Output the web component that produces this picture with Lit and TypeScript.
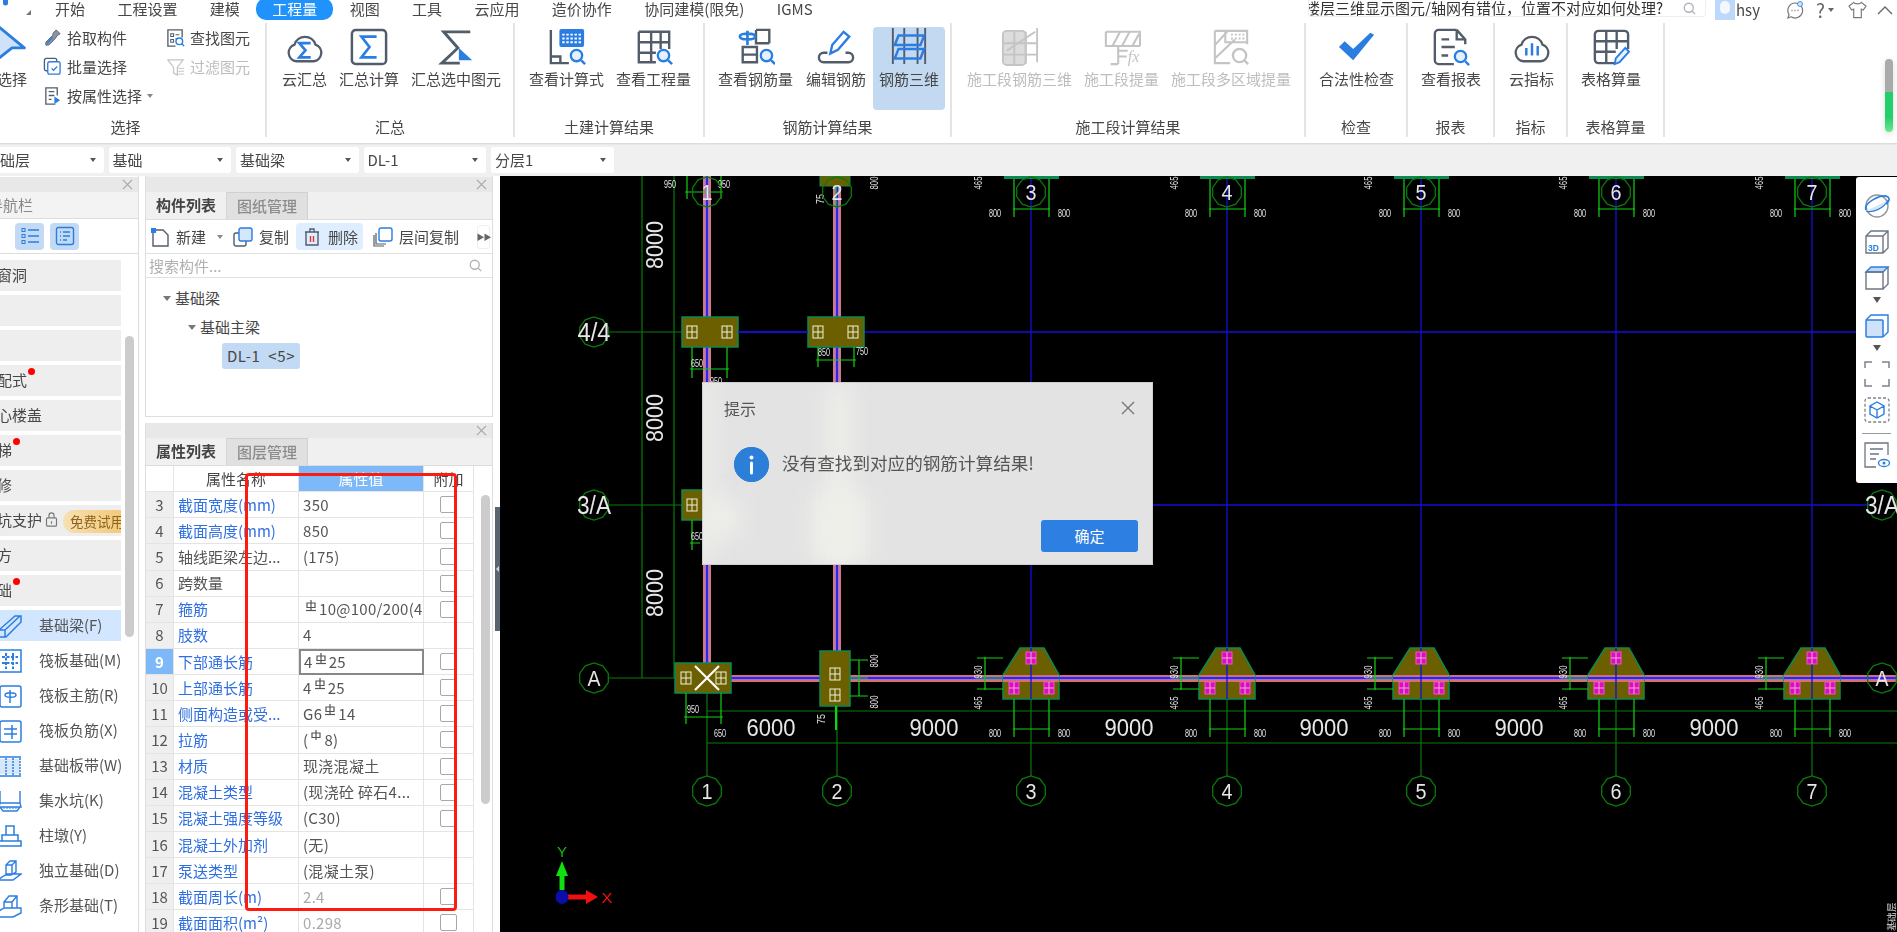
import { LitElement, html, css, svg } from 'lit';
import { customElement } from 'lit/decorators.js';

const G = '#525c6b';
const B = '#2a7de1';
const D = '#c4c4c4'; // disabled icon grey

const glass = (x: number, y: number, r = 6) => svg`
  <circle cx=${x} cy=${y} r=${r} fill="#e4f0fd" stroke=${B} stroke-width="2.4"/>
  <path d="M${x + r - 1} ${y + r - 1}l4 4" stroke=${B} stroke-width="2.6"/>`;

const sigma = svg`<path d="M26 13H14l6.5 7.5L14 28h12" fill="none" stroke=${B} stroke-width="2.8"/>`;

// big ribbon icons, all on a 40 box
const ICONS: Record<string, any> = {
  select: svg`<path d="M5 1L33 24H20L5 36z" fill="#cfe2f9" stroke=${B} stroke-width="3" stroke-linejoin="round"/>`,
  cloudSum: svg`<path d="M11 35a9 9 0 0 1-2-17.500a11.500 11.500 0 0 1 22 0a9 9 0 0 1-2 17.500z" fill="none" stroke=${G} stroke-width="2.400"/><g transform="translate(0 3)">${sigma}</g>`,
  boxSum: svg`<rect x="2" y="2" width="36" height="36" rx="4" fill="none" stroke=${G} stroke-width="2.600"/><path d="M28 9H12l8.500 11L12 31h16" fill="none" stroke=${B} stroke-width="2.800"/>`,
  selSum: svg`<path d="M35 4H7l15 17L5 37h19" fill="none" stroke=${G} stroke-width="3"/><path d="M23 21l14 13H23z" fill=${B}/>`,
  calcView: svg`<path d="M3 2v35h19M3 30h10v7" fill="none" stroke=${G} stroke-width="2.500"/><rect x="12" y="1" width="26" height="19" rx="2" fill=${B}/><path d="M15 7h20M15 11h20M15 15h20" stroke="#fff" stroke-width="2" stroke-dasharray="2.500 1.800"/>${glass(30, 29, 6)}`,
  qtyView: svg`<path d="M4 4h32v18M4 4v32h18M17 4v32M4 15h32M4 26h18M27 4v18" fill="none" stroke=${G} stroke-width="2.500"/>${glass(30, 29, 6)}`,
  rebarQty: svg`<path d="M20 2h14v14M20 2v14h14M21 20v16h-15V20zM6 28h15" fill="none" stroke=${G} stroke-width="2.500"/><path d="M11 2v15M3 8c0-4 16-4 16 0s-16 4-16 0" fill="none" stroke=${B} stroke-width="2.800" transform="translate(0 1)"/>${glass(31, 29, 6)}`,
  rebarEdit: svg`<path d="M10 26H6a5 5 0 0 0 0 10h26a5 5 0 0 0 0-10h-3" fill="none" stroke=${G} stroke-width="2.500" transform="translate(1 0)"/><path d="M14 27l2-9L28 4l6 5-12 14z" fill="none" stroke=${B} stroke-width="2.500"/>`,
  rebar3d: svg`<path d="M3 0v38M15 0v38M29 0v38M37 0v38" stroke=${G} stroke-width="2"/><path d="M9 8h27l-4 10H5zM9 22h27l-4 10H5z" fill="none" stroke=${B} stroke-width="2.600"/>`,
  stage3d: svg`<rect x="2" y="3" width="24" height="36" rx="4" fill="#dcdcdc" stroke=${D} stroke-width="2"/><path d="M6 24L36 4M2 16h36M2 28h36M14 4v34M26 4v34M38 0v36" fill="none" stroke=${D} stroke-width="2"/>`,
  stageFx: svg`<path d="M3 4h36v15M3 4v15h36M10 19L18 4M20 19l8-15M31 19l7-13M16 19v19M16 24h10M16 38h-8M16 30h9" fill="none" stroke=${D} stroke-width="2.200"/><text x="26" y="36" font-family="Liberation Serif" font-style="italic" font-size="17" fill=${D}>fx</text>`,
  stageArea: svg`<path d="M3 3h34v14M3 3v34h16M3 18L16 4M3 32L24 12M14 3v12h23" fill="none" stroke=${D} stroke-width="2.200"/><path d="M20 7h14M20 11h14" stroke=${D} stroke-width="2" stroke-dasharray="2 2"/><circle cx="29" cy="29" r="7" fill="none" stroke=${D} stroke-width="2.400"/><path d="M34 34l4 4" stroke=${D} stroke-width="2.400"/>`,
  check: svg`<path d="M1 20l6-6 9 8L34 5l4 2-22 27z" fill=${B}/>`,
  report: svg`<path d="M26 2H7a4 4 0 0 0-4 4v28a4 4 0 0 0 4 4h16M26 2l9 10v5M26 2v10h9M10 12h8M10 20h14M10 29h7" fill="none" stroke=${G} stroke-width="2.500"/>${glass(30, 30, 6)}`,
  cloudBars: svg`<path d="M11 35a9 9 0 0 1-2-17.500a11.500 11.500 0 0 1 22 0a9 9 0 0 1-2 17.500z" fill="none" stroke=${G} stroke-width="2.400"/><path d="M14 21v8M20 16v13M26 19v10" stroke=${B} stroke-width="2.600"/>`,
  tableEdit: svg`<path d="M24 37H7a4 4 0 0 1-4-4V7a4 4 0 0 1 4-4h27a4 4 0 0 1 4 4v15M3 14h35M3 25h22M15 3v34M26 3v19" fill="none" stroke=${G} stroke-width="2.500"/><path d="M24 38l1-6 10-11 4 4-10 11z" fill="#e4f0fd" stroke=${B} stroke-width="2"/>`,
};

// small ribbon and panel icons, on a 20 box
const SMALL: Record<string, any> = {
  pick: svg`<path d="M14 2l4 4-3 2-2 3-7 7H3v-3l7-7 1-3z" fill="#8b94a2" stroke=${G}/><path d="M4 16l6-6" stroke=${B} stroke-width="1.500"/>`,
  batch: svg`<rect x="1.500" y="1.500" width="13" height="13" rx="2" fill="none" stroke=${G} stroke-width="1.400"/><rect x="5" y="5" width="13" height="13" rx="2" fill="#fff" stroke=${B} stroke-width="1.400"/><path d="M9 12l2 2 4-4" fill="none" stroke=${B} stroke-width="1.300"/>`,
  attr: svg`<path d="M15 10V2H3v17h10M6 6h6M6 10h6M6 14h3" fill="none" stroke=${G} stroke-width="1.400"/><path d="M12 11l6 4-6 4z" fill=${B}/>`,
  find: svg`<path d="M17 10V2H2v17h8" fill="none" stroke=${G} stroke-width="1.400"/><path d="M5 6h3v3H5zM5 12h3v3H5zM10 7h4M10 11h2" fill="none" stroke=${G} stroke-width="1.100"/><circle cx="14" cy="14" r="3.500" fill="none" stroke=${B} stroke-width="1.500"/><path d="M16.500 16.500l2.500 2.500" stroke=${B} stroke-width="1.500"/>`,
  filter: svg`<path d="M2 3h16l-6 8v8l-4-2v-6z" fill="none" stroke=${D} stroke-width="1.300"/><path d="M13 12h6M13 15h6M13 18h6" stroke=${D}/>`,
  newDoc: svg`<path d="M3 19V3h10l5 5v11z" fill="#fff" stroke=${G} stroke-width="1.400"/><rect x="1" y="1" width="5" height="5" fill=${B}/>`,
  copy: svg`<rect x="1" y="6" width="12" height="13" rx="2" fill="#fff" stroke=${G} stroke-width="1.400"/><rect x="6" y="1" width="13" height="13" rx="2" fill="#d6e7fb" stroke=${B} stroke-width="1.400"/>`,
  trash: svg`<path d="M3 5h14M8 5V2h4v3M4 5v13h12V5" fill="none" stroke=${G} stroke-width="1.400"/><path d="M8.500 9v6M11.500 9v6" stroke="#e33" stroke-width="1.400"/>`,
  layerCopy: svg`<path d="M1 8v11h10" fill="none" stroke=${G} stroke-width="1.200"/><path d="M3 6v11h10" fill="none" stroke=${G} stroke-width="1.200"/><rect x="6" y="1" width="13" height="13" rx="2" fill="#fff" stroke=${B} stroke-width="1.400"/>`,
  list: svg`<path d="M8 4h11M8 10h11M8 16h11" stroke=${B} stroke-width="1.500"/><rect x="2" y="2.500" width="3" height="3" fill="none" stroke=${B}/><rect x="2" y="8.500" width="3" height="3" fill="none" stroke=${B}/><rect x="2" y="14.500" width="3" height="3" fill="none" stroke=${B}/>`,
  card: svg`<rect x="1.500" y="1.500" width="17" height="17" rx="2" fill="none" stroke=${B} stroke-width="1.400"/><path d="M5 6h1M8 6h7M5 10h1M8 10h7M5 14h1M8 14h4" stroke=${B} stroke-width="1.300"/>`,
  search: svg`<circle cx="9" cy="9" r="6" fill="none" stroke="#aeb2b7" stroke-width="1.800"/><path d="M13.500 13.500l4 4" stroke="#aeb2b7" stroke-width="1.800"/>`,
  lock: svg`<rect x="3" y="8" width="12" height="10" rx="1.500" fill="none" stroke="#777" stroke-width="1.400"/><path d="M6 8V5a3 3 0 0 1 6 0v3M9 12v3" fill="none" stroke="#777" stroke-width="1.400"/>`,
};

// left navigation icons, on a 24 box
const NAV: Record<string, any> = {
  beam: svg`<path d="M1 23v-7L17 2h6v6L8 23zM1 16h6v7M7 16L22 2" fill="none" stroke=${B} stroke-width="1.500"/>`,
  raft: svg`<path d="M1 1h22v22H1z" fill="none" stroke=${B} stroke-width="1.500"/><path d="M4 8h16M4 14h16M8 4v16M15 4v16" stroke=${B} stroke-width="2" stroke-dasharray="3 1.500"/>`,
  main: svg`<rect x="2" y="2" width="21" height="21" rx="2" fill="none" stroke=${B} stroke-width="1.500"/><path d="M12 6v13M7 11c0-3 11-3 11 0s-11 3-11 0" fill="none" stroke=${B} stroke-width="1.500"/>`,
  neg: svg`<rect x="2" y="2" width="21" height="21" rx="2" fill="none" stroke=${B} stroke-width="1.500"/><path d="M6 10h13M6 15h13M14 6v14" fill="none" stroke=${B} stroke-width="1.500"/>`,
  band: svg`<path d="M0 3h23M0 22h23" stroke=${B} stroke-width="1.500"/><path d="M0 5h22v15H0z" fill="#d6e7fb"/><path d="M8 4v17M15 4v17M22 4v17" stroke=${B} stroke-width="1.500" stroke-dasharray="2 1"/>`,
  pit: svg`<path d="M2 2v12h20V2M2 14l-1 4h22l-1-4M2 18l3 4h14l3-4" fill="none" stroke=${B} stroke-width="1.400"/><path d="M5 19h14" stroke=${B} stroke-dasharray="2 1"/>`,
  pier: svg`<path d="M8 2h8v9H8zM4 11h16v6H4zM1 17h22v5H1z" fill="none" stroke=${B} stroke-width="1.500"/>`,
  isolated: svg`<path d="M8 6l4-4h6v11l-5 3H8zM8 6h6v10M14 6l4-4M1 20l8-5h14l-8 6H2z" fill="none" stroke=${B} stroke-width="1.400"/>`,
  strip: svg`<path d="M6 8l5-6h8v12H6zM6 8h8v6M14 8l5-6M1 17l5-3h17v5l-8 4H1z" fill="none" stroke=${B} stroke-width="1.400"/>`,
};

// right side view toolbar icons, on a 26 box
const VIEW: Record<string, any> = {
  orbit: svg`<circle cx="13" cy="13" r="11" fill="none" stroke="#8f96a0" stroke-width="1.400"/><path d="M2 17C-1 10 18 0 24 4c2 2 1 5-2 7" fill="none" stroke=${B} stroke-width="1.600"/><path d="M2 18c6 2 18-2 22-11" fill="#d6e7fb" stroke=${B} stroke-width="1.200"/>`,
  cube3d: svg`<path d="M2 7l5-5h17v17l-5 5H2zM2 7h17v17M19 7l5-5" fill="none" stroke="#6d7582" stroke-width="1.400"/><text x="4" y="22" font-family="Liberation Sans" font-size="8.500" font-weight="700" fill=${B}>3D</text>`,
  cubeTop: svg`<path d="M2 7l5-5h17l-5 5z" fill="#bcd7f6" stroke=${B} stroke-width="1.400"/><path d="M2 7h17v17H2zM19 24l5-5V2" fill="none" stroke="#6d7582" stroke-width="1.400"/>`,
  cubeFront: svg`<path d="M2 7l5-5h17v17l-5 5" fill="none" stroke=${B} stroke-width="1.400"/><rect x="2" y="7" width="17" height="17" rx="1" fill="#cfe2f9" stroke=${B} stroke-width="1.500"/>`,
  corners: svg`<path d="M1 7V1h7M18 1h7v6M25 18v7h-7M8 25H1v-7" fill="none" stroke="#7a828e" stroke-width="1.500"/>`,
  dashCube: svg`<rect x="1" y="1" width="24" height="24" rx="3" fill="none" stroke="#7a828e" stroke-width="1.300" stroke-dasharray="3 2"/><path d="M13 5l7 4v8l-7 4-7-4V9zM6 9l7 4 7-4M13 13v8" fill="none" stroke=${B} stroke-width="1.400"/>`,
  docEye: svg`<path d="M24 13V1H1v24h11M6 7h13M6 12h9M6 17h6" fill="none" stroke="#6d7582" stroke-width="1.300"/><ellipse cx="20" cy="21" rx="5.500" ry="3.500" fill="#fff" stroke=${B} stroke-width="1.300"/><circle cx="20" cy="21" r="1.500" fill=${B}/>`,
};

const RIBBON = [
  { label: '汇总', width: 248, pad: 9, items: [['云汇总', 'cloudSum'], ['汇总计算', 'boxSum'], ['汇总选中图元', 'selSum']] },
  { label: '土建计算结果', width: 190, pad: 8, items: [['查看计算式', 'calcView'], ['查看工程量', 'qtyView']] },
  { label: '钢筋计算结果', width: 247, pad: 7, gap: 1, items: [['查看钢筋量', 'rebarQty'], ['编辑钢筋', 'rebarEdit'], ['钢筋三维', 'rebar3d', 'on']] },
  { label: '施工段计算结果', width: 354, pad: 9, items: [['施工段钢筋三维', 'stage3d', 'off'], ['施工段提量', 'stageFx', 'off'], ['施工段多区域提量', 'stageArea', 'off']] },
  { label: '检查', width: 102, pad: 7, items: [['合法性检查', 'check']] },
  { label: '报表', width: 87, pad: 7, items: [['查看报表', 'report']] },
  { label: '指标', width: 73, pad: 8, items: [['云指标', 'cloudBars']] },
  { label: '表格算量', width: 97, pad: 7, items: [['表格算量', 'tableEdit']] },
];

const TABS = ['开始', '工程设置', '建模', '工程量', '视图', '工具', '云应用', '造价协作', '协同建模(限免)', 'IGMS'];

const NAV_GROUPS = [
  { t: '门窗洞' }, { t: '' }, { t: '' }, { t: '装配式', dot: 31 }, { t: '空心楼盖' }, { t: '楼梯', dot: 16 },
  { t: '装修' }, { t: '基坑支护', lock: true }, { t: '土方' }, { t: '基础', dot: 16 },
];
const NAV_ITEMS = [
  ['基础梁(F)', 'beam'], ['筏板基础(M)', 'raft'], ['筏板主筋(R)', 'main'], ['筏板负筋(X)', 'neg'], ['基础板带(W)', 'band'],
  ['集水坑(K)', 'pit'], ['柱墩(Y)', 'pier'], ['独立基础(D)', 'isolated'], ['条形基础(T)', 'strip'],
];

// [row, name, blue name, value, checkbox]
const ROWS: [number, string, boolean, any, boolean][] = [
  [3, '截面宽度(mm)', true, '350', true],
  [4, '截面高度(mm)', true, '850', true],
  [5, '轴线距梁左边...', false, '(175)', true],
  [6, '跨数量', false, '', true],
  [7, '箍筋', true, ['', 'b', '10@100/200(4)'], true],
  [8, '肢数', true, '4', false],
  [9, '下部通长筋', true, ['4', 'b', '25'], true],
  [10, '上部通长筋', true, ['4', 'b', '25'], true],
  [11, '侧面构造或受...', true, ['G6', 'b', '14'], true],
  [12, '拉筋', true, ['(', 'a', '8)'], true],
  [13, '材质', true, '现浇混凝土', true],
  [14, '混凝土类型', true, '(现浇砼 碎石4...', true],
  [15, '混凝土强度等级', true, '(C30)', true],
  [16, '混凝土外加剂', true, '(无)', false],
  [17, '泵送类型', true, '(混凝土泵)', false],
  [18, '截面周长(m)', true, '2.4', true],
  [19, '截面面积(m²)', true, '0.298', true],
];

const AXES = [[707, '1'], [837, '2'], [1031, '3'], [1227, '4'], [1421, '5'], [1616, '6'], [1812, '7']] as [number, string][];
const DIM = '#0a7a0a';
const LIME = '#12d012';
const TXT = '#e6e6e6';

const label = (x: number, y: number, s: string, size: number, len: number, rot = false, fill = TXT) => svg`
  <text x=${x} y=${y + size * 0.36} text-anchor="middle" font-family="Liberation Sans" font-size=${size} fill=${fill}
    textLength=${len} lengthAdjust="spacingAndGlyphs" transform=${rot ? `rotate(-90 ${x} ${y})` : ''}>${s}</text>`;

const bubble = (x: number, y: number, s: string, size = 22, len = 11) => {
  const pts = Array.from({ length: 10 }, (_, i) => {
    const a = (i * Math.PI) / 5 + Math.PI / 10;
    return `${(x + 15 * Math.cos(a)).toFixed(1)},${(y + 15 * Math.sin(a)).toFixed(1)}`;
  }).join(' ');
  return svg`<polygon points=${pts} fill="none" stroke=${DIM} stroke-width="1.300"/>${label(x, y, s, size, len)}`;
};

const cell = (x: number, y: number, hot = false) => svg`
  <rect x=${x - 5} y=${y - 6} width="10" height="12" fill=${hot ? '#d810b8' : 'none'} stroke=${hot ? '#f050d8' : '#f0f0e0'} stroke-width="1"/>
  <path d="M${x - 5} ${y}h10M${x} ${y - 6}v12" stroke=${hot ? '#f8a0e8' : '#f0f0e0'} stroke-width="1"/>`;

const pier = (x: number, y: number, w: number, h: number) => svg`
  <rect x=${x} y=${y} width=${w} height=${h} fill="#6b5f00" stroke="#0b8a52" stroke-width="1.500"/>`;

const vBeam = (x: number) => svg`
  <rect x=${x - 4} y="176" width="8" height="506" fill="#d8767e"/>
  <rect x=${x - 2} y="176" width="4" height="502" fill="#a070d8"/>
  <rect x=${x - 1} y="176" width="2" height="502" fill="#2a2ae0"/>`;

// dim brace under (or over) a trapezoid pier column
const brace = (cx: number, y1: number, y2: number, tick: number, lab: number) => svg`
  <path d="M${cx - 17} ${y1}V${y2}M${cx + 18} ${y1}V${y2}M${cx - 18} ${tick}H${cx + 19}" stroke=${LIME} stroke-width="1.200"/>
  ${label(cx - 36, lab, '800', 10, 12)}${label(cx + 33, lab, '800', 10, 12)}`;

function drawing() {
  const tops = AXES.slice(2);
  return svg`
    <path d="M642 176V678M674 176V678M609 678H675M609 332H682M609 505H682M707 711H1897M707 743H1897" stroke=${DIM} stroke-width="1.200"/>
    ${tops.map(([x]) => svg`<path d="M${x} 176V699" stroke="#1010d8" stroke-width="1.300"/><path d="M${x} 699V776" stroke=${DIM} stroke-width="1.200"/>`)}
    <path d="M738 332H1860M864 332H1860M1150 505H1870" stroke="#1010d8" stroke-width="1.500"/>
    <path d="M707 693V776M837 706V776" stroke=${DIM} stroke-width="1.200"/>
    ${vBeam(707)}${vBeam(837)}

    ${pier(682, 317, 56, 30)}${pier(808, 317, 56, 30)}${pier(682, 490, 56, 30)}
    <path d="M738 332H808" stroke="#1010d8" stroke-width="1.500"/>
    ${cell(692, 332)}${cell(727, 332)}${cell(818, 332)}${cell(853, 332)}${cell(692, 505)}

    <path d="M692 347V378M727 347V378M690 369H729M818 347V367M854 347V367M816 360H856M692 520V550M690 543H700" stroke=${LIME} stroke-width="1.200"/>
    ${label(697, 363, '650', 10, 12)}${label(716, 381, '950', 10, 12)}${label(824, 352, '850', 10, 12)}${label(862, 351, '750', 10, 12)}${label(697, 536, '650', 10, 12)}

    <rect x="707" y="675" width="1190" height="7" fill="#d8706a"/>
    <rect x="707" y="676.500" width="1190" height="3.500" fill="#a868d8"/>
    <rect x="707" y="677" width="1190" height="2" fill="#2a2ae8"/>

    ${pier(675, 663, 56, 30)}${pier(820, 651, 30, 55)}
    ${cell(686, 678)}${cell(721, 678)}${cell(835, 674)}${cell(835, 695)}
    <path d="M695 666L719 690M719 666L695 690" stroke="#fff" stroke-width="2.200"/>
    <path d="M686 693V724M721 693V724M684 717H723" stroke=${LIME} stroke-width="1.200"/>
    <path d="M836 706V730" stroke=${LIME} stroke-width="2"/>
    <path d="M850 660H868M850 696H868M859 660V696M850 678H868" stroke=${LIME} stroke-width="1.200"/>
    ${label(693, 709, '950', 10, 12)}${label(720, 733, '650', 10, 12)}${label(821, 719, '75', 11, 10, true)}
    ${label(874, 661, '800', 10, 13, true)}${label(874, 702, '800', 10, 13, true)}

    <path d="M687 176V199M721 176V199M685 192H723M836 176V208" stroke=${LIME} stroke-width="1.200"/>
    <rect x="820" y="176" width="30" height="10" fill="#6b5f00" stroke="#0b8a52"/>
    ${label(670, 184, '950', 10, 12)}${label(724, 184, '950', 10, 12)}${label(820, 199, '75', 11, 10, true)}${label(874, 183, '800', 10, 13, true)}

    ${tops.map(([x]) => svg`
      <rect x=${x - 27} y="176" width="55" height="3" fill="#0b8a52"/>
      ${brace(x, 179, 217, 209, 213)}
      ${label(x - 53, 183, '465', 10, 13, true)}
      <path d="M${x - 28} 699L${x - 28} 675L${x - 11} 648H${x + 13}L${x + 28} 675V699z" fill="#6b5f00" stroke="#0b8a52" stroke-width="1.500"/>
      <rect x=${x - 28} y="675" width="56" height="7" fill="#d8706a"/>
      <rect x=${x - 28} y="676.500" width="56" height="3.500" fill="#a868d8"/>
      <rect x=${x - 28} y="677" width="56" height="2" fill="#2a2ae8"/>
      <path d="M${x} 648V699" stroke="#1010d8" stroke-width="1.300"/>
      ${cell(x, 658, true)}${cell(x - 17, 688, true)}${cell(x + 18, 688, true)}
      ${brace(x, 699, 737, 729, 733)}
      <path d="M${x - 54} 658H${x - 28}M${x - 54} 689H${x - 28}M${x - 46} 657V690M${x - 54} 678H${x - 28}" stroke=${LIME} stroke-width="1.200"/>
      ${label(x - 53, 672, '930', 10, 13, true)}${label(x - 53, 703, '465', 10, 13, true)}
    `)}

    ${label(654, 245, '8000', 24, 48, true)}${label(654, 418, '8000', 24, 48, true)}${label(654, 593, '8000', 24, 48, true)}
    ${label(771, 727, '6000', 24, 49)}
    ${[934, 1129, 1324, 1519, 1714].map(x => label(x, 727, '9000', 24, 49))}

    ${AXES.map(([x, s]) => svg`${bubble(x, 791, s)}${bubble(x, 192, s)}`)}
    ${bubble(594, 678, 'A', 22, 13)}${bubble(594, 332, '4/4', 25, 33)}${bubble(594, 505, '3/A', 25, 34)}
    ${bubble(1882, 678, 'A', 22, 13)}${bubble(1882, 505, '3/A', 25, 34)}

    <path d="M562 890V870" stroke="#10e010" stroke-width="5"/>
    <path d="M556 876L562 861L568 876z" fill="#10e010"/>
    ${label(562, 852, 'Y', 15, 10, false, '#10c010')}
    <path d="M568 897H588" stroke="#f01010" stroke-width="5"/>
    <path d="M586 890L598 897L586 904z" fill="#f01010"/>
    <ellipse cx="562" cy="897" rx="6.500" ry="7" fill="#0c0ca8"/>
    ${label(607, 898, 'X', 15, 11, false, '#f01010')}
    ${label(1891, 917, '基础层', 10, 28, true)}
  `;
}

const rebarMark = (kind: string) => html`<svg class="rebar" viewBox="0 0 12 13">
  <path d="M2 3h8v4.500H2zM6 0v10" fill="none" stroke="#555" stroke-width="1.200"/>
  ${kind === 'b' ? svg`<path d="M1 10.500h10" stroke="#555" stroke-width="1.200"/>` : ''}
</svg>`;

@customElement('app-root')
export class AppRoot extends LitElement {
  static styles = css`
    :host {
      display: block;
      width: 1897px;
      height: 932px;
      overflow: hidden;
      position: relative;
      background: #f0f0f0;
      color: #474747;
      font: 15px/20px "Noto Sans CJK SC", "Noto Sans", sans-serif;
    }
    .page { filter: blur(0.35px); height: 932px; }

    .top { height: 20px; display: flex; align-items: center; background: #fff; white-space: nowrap; }
    .brand { width: 39px; height: 20px; flex: none; }
    .tab { padding: 0 16px; line-height: 18px; height: 20px; margin-right: 0.4px; box-sizing: border-box; }
    .tab.on { background: #1f92fb; color: #fff; border-radius: 10px; margin-top: -2px; height: 22px; line-height: 22px; }
    .ask { margin-left: auto; width: 398px; height: 17px; flex: none; align-self: flex-start; display: flex; justify-content: flex-end; align-items: center;
      overflow: hidden; border: 1px solid #eee; border-top: 0; box-sizing: border-box; border-radius: 0 0 3px 3px; color: #333; position: relative; padding-right: 42px; }
    .ask svg { position: absolute; right: 8px; top: 1px; width: 15px; height: 15px; }
    .user { display: flex; align-items: center; margin-left: 9px; width: 71px; gap: 1px; flex: none; }
    .avatar { width: 20px; height: 20px; background: #bcd9fb; position: relative; overflow: hidden; }
    .avatar::after { content: ""; position: absolute; left: 5px; top: 1px; width: 10px; height: 13px; border-radius: 5px; background: #f4f8fe; }
    .mini { display: flex; align-items: center; width: 111px; flex: none; color: #666; }
    .mini svg { flex: none; }
    .mini .q { font-size: 19px; margin: 0 3px 0 12px; }
    .mini .caret { border-top-color: #666; margin-right: 14px; }
    .mini .up { margin-left: 10px; }

    .ribbon { height: 123px; display: flex; background: #fff; border-bottom: 1px solid #dcdcdc; box-shadow: 0 1px 0 #e8e8e8; position: relative; }
    .group { box-sizing: border-box; height: 114px; margin-top: 3px; border-right: 2px solid #e4e4e4; display: flex; flex-direction: column; flex: none; }
    .group:first-child { width: 267px; }
    .btns { display: flex; padding-top: 4px; height: 83px; }
    .big { display: flex; flex-direction: column; align-items: center; padding: 1px 6px 0; border-radius: 4px; white-space: nowrap; }
    .big svg { width: 38px; height: 38px; margin-bottom: 3px; flex: none; }
    .big.on { background: #c2d9f1; }
    .big.off { color: #bdbdbd; }
    .glabel { text-align: center; margin-top: auto; line-height: 20px; }
    .glabel.first { padding-right: 14px; }
    .sel-area { display: flex; height: 90px; }
    .sel-big { margin: 1px 3px 0 -16px; width: 56px; flex: none; }
    .sel-big.big { padding: 1px 0 0; }
    .sel-big.big svg { margin-bottom: 6px; }
    .col { width: 123px; flex: none; }
    .small { height: 29px; display: flex; align-items: center; gap: 5px; white-space: nowrap; }
    .small svg { width: 19px; height: 19px; flex: none; }
    .small.off { color: #bdbdbd; }
    .caret { width: 0; height: 0; border: 3.500px solid transparent; border-top: 4px solid #888; border-bottom: 0; }
    .vbar { position: absolute; left: 1885px; top: 39px; width: 8px; height: 73px; border-radius: 4px; overflow: hidden; background: linear-gradient(#aaa 45%, #22cf6c 45%, #22cf6c 80%, #6fe88e); box-shadow: 0 2px 6px rgba(0,0,0,.15); }

    .selects { height: 32px; display: flex; gap: 5px; align-items: center; box-sizing: border-box; margin-left: -19px; }
    .selbox { width: 122.500px; height: 26px; background: #fff; border-radius: 3px; display: flex; align-items: center; justify-content: space-between; padding: 0 8px 0 4px; box-sizing: border-box; flex: none; overflow: hidden; white-space: nowrap; line-height: 24px; }
    .selbox .caret { border-top-color: #555; }

    .main { display: grid; grid-template-columns: 139px 361px 1397px; height: 756px; }
    .nav { background: #fff; overflow: hidden; border-right: 1px solid #dcdcdc; box-sizing: border-box; width: 139px; position: relative; }
    .phead { height: 15px; background: #e8e8e8; margin-top: 1px; display: flex; justify-content: flex-end; align-items: center; padding-right: 5px; flex: none; }
    .phead svg { width: 11px; height: 11px; }
    .navtitle { height: 26px; background: #f3f3f3; border-bottom: 1px solid #dcdcdc; line-height: 25px; color: #888; overflow: hidden; white-space: nowrap; }
    .navtitle span { display: block; margin-left: -12px; }
    .navbtns { height: 35px; display: flex; gap: 6px; padding-left: 15px; align-items: center; border-bottom: 1px solid #dedede; box-sizing: border-box; }
    .navbtn { width: 29px; height: 27px; border-radius: 4px; background: #c2daf3; display: flex; align-items: center; justify-content: center; }
    .navbtn svg { width: 20px; height: 20px; }
    .navlist { width: 121px; margin-top: 6px; display: flex; flex-direction: column; gap: 4px; }
    .ng { height: 31px; background: #eee; position: relative; overflow: hidden; line-height: 29px; white-space: nowrap; flex: none; }
    .ng .t { margin-left: -18px; display: flex; align-items: center; height: 29px; }
    .ng .lock { width: 15px; height: 17px; margin-left: 2px; flex: none; }
    .badge { margin-left: 4px; height: 23px; line-height: 23px; padding: 0 0 0 7px; border-radius: 12px 0 0 12px; background: linear-gradient(90deg, #f7e0b2, #f3c878); color: #8c6420; font-size: 13.500px; flex: none; margin-top: 3px; }
    .dot { position: absolute; width: 7px; height: 7px; border-radius: 50%; background: #f00; top: 3px; }
    .ni { height: 31px; display: flex; align-items: center; white-space: nowrap; overflow: hidden; flex: none; color: #555; line-height: 29px; }
    .ni svg { width: 24px; height: 24px; margin-left: -2px; margin-right: 17px; flex: none; }
    .ni span { margin-top: -2px; }
    .ni.on { background: #d2e7ff; }
    .navthumb { position: absolute; left: 125px; top: 160px; width: 9px; height: 301px; background: #ccc; border-radius: 5px; }

    .mid { display: flex; flex-direction: column; padding: 0 7px 0 6px; background: #fff; position: relative; }
    .panel { border: 1px solid #dedede; border-top: 0; background: #f0f0f0; display: flex; flex-direction: column; overflow: hidden; box-sizing: border-box; width: 348px; }
    .p1 { height: 241px; }
    .p2 { height: 509px; margin-top: 6px; border-bottom: 0; }
    .p2 .phead { margin-top: 0; }
    .ptabs { height: 28px; display: flex; border-bottom: 1px solid #dcdcdc; box-sizing: border-box; flex: none; }
    .ptab { width: 81px; text-align: center; line-height: 25px; font-weight: 700; color: #444; border-right: 1px solid #d4d4d4; box-sizing: border-box; }
    .ptab.off { background: #e0e0e0; color: #8c8c8c; font-weight: 500; border: 1px solid #d0d0d0; border-left: 0; border-bottom: 0; }
    .tools { height: 34px; background: #fff; display: flex; align-items: center; border-bottom: 1px solid #e2e2e2; flex: none; padding-left: 2px; box-sizing: border-box; white-space: nowrap; }
    .tool { display: flex; align-items: center; gap: 6px; height: 27px; padding: 0 4px 0 2px; }
    .tool svg { width: 20px; height: 20px; flex: none; }
    .tool .caret { margin-left: 5px; }
    .t2 { margin-left: 4px; }
    .t3 { margin-left: 3px; }
    .t4 { margin-left: 8px; }
    .tool.on { background: #deeeff; border-radius: 4px; padding: 0 5px 0 6px; }
    .more { width: 13px; height: 24px; border: 1px solid #eee; border-radius: 3px; box-sizing: border-box; display: flex; align-items: center; justify-content: center; color: #666; font-size: 8px; margin-left: auto; margin-right: 2px; letter-spacing: -1px; }
    .psearch { height: 24px; background: #fff; display: flex; justify-content: space-between; align-items: center; padding: 0 9px 0 3px; color: #b0b0b0; border-bottom: 1px solid #e2e2e2; flex: none; box-sizing: border-box; }
    .psearch svg { width: 15px; height: 15px; }
    .tree { flex: 1; background: #fff; position: relative; padding-top: 8px; }
    .node { height: 24px; display: flex; align-items: center; gap: 4px; margin-bottom: 5px; }
    .node.lv1 { padding-left: 17px; }
    .node.lv2 { padding-left: 42px; }
    .node .caret { border-top-color: #777; border-width: 4px; border-top-width: 5px; }
    .chip { margin-left: 76px; width: 78px; height: 26px; line-height: 26px; background: #c2daf3; border-radius: 3px; text-align: center; white-space: pre; margin-top: -1px; letter-spacing: 0.6px; }

    .table { flex: 1; background: #fff; display: flex; overflow: hidden; }
    .grid { width: 328px; flex: none; display: grid; grid-template-columns: 28px 125px 125px 50px; grid-auto-rows: 26.150px; align-content: start; }
    .grid > div { border-right: 1px solid #e4e4e4; border-bottom: 1px solid #e4e4e4; box-sizing: border-box; white-space: nowrap; overflow: hidden; display: flex; align-items: center; line-height: 20px; }
    .h { justify-content: center; color: #444; }
    .h.v { background: #7db8f8; color: #fff; }
    .n { background: #efefef; justify-content: center; color: #555; }
    .n.sel { background: #7db8f8; color: #fff; font-weight: 700; }
    .name { padding-left: 4px; color: #555; }
    .name.blue { color: #2f6fe0; }
    .val { padding-left: 4px; color: #555; letter-spacing: 0.3px; }
    .val.ro { color: #aaa; }
    .grid > .val.edit { border: 2px solid #888; padding-left: 3px; }
    .chk { justify-content: center; }
    .box { width: 17px; height: 17px; border: 1.500px solid #a8a8a8; border-radius: 2px; box-sizing: border-box; background: #fff; }
    .rebar { width: 12px; height: 13px; margin: -6px 2px 0 2px; flex: none; }
    .tscroll { flex: 1; position: relative; background: #fff; }
    .tscroll i { display: block; margin: 29px 0 0 7px; width: 9px; height: 309px; border-radius: 5px; background: #ccc; }
    .strip { position: absolute; right: 0; top: 331px; width: 5px; height: 124px; background: #5a6570; display: flex; align-items: center; }
    .strip::after { content: ""; border: 3px solid transparent; border-right: 3px solid #cfd4d9; border-left: 0; margin-left: 1px; }

    .canvas { background: #000; position: relative; overflow: hidden; }
    .canvas > svg { display: block; position: absolute; left: 0; top: 0; width: 1397px; height: 756px; }
    .views { position: absolute; left: 1356px; top: 1px; width: 41px; height: 306px; background: #fff; border-radius: 3px 0 0 3px; display: flex; flex-direction: column; align-items: center; padding-top: 16px; box-sizing: border-box; }
    .views svg { width: 26px; height: 26px; flex: none; margin-bottom: 10px; }
    .views .vc { width: 0; height: 0; border: 4px solid transparent; border-top: 6px solid #555; border-bottom: 0; margin: -4px 0 10px; flex: none; }
    .views hr { width: 29px; border: 0; border-top: 1px solid #999; margin: 0 0 8px; flex: none; }

    .dialog { position: absolute; left: 202px; top: 206px; width: 451px; height: 183px; background: #e3e3e4; overflow: hidden; box-sizing: border-box; border: 1px solid #cfcfcf; display: flex; flex-direction: column; }
    .glow { position: absolute; background: #efefea; filter: blur(12px); }
    .dhead { height: 49px; display: flex; align-items: center; justify-content: space-between; padding: 0 17px 0 21px; font-size: 16px; color: #555; position: relative; flex: none; }
    .dhead svg { width: 14px; height: 14px; }
    .dbody { display: flex; align-items: center; gap: 13px; padding: 15px 0 0 31px; font-size: 17.600px; color: #555; position: relative; white-space: nowrap; }
    .dbody span { margin-top: -3px; }
    .info { width: 35px; height: 35px; border-radius: 50%; background: #2b7fd8; flex: none; }
    .dfoot { margin-top: auto; display: flex; justify-content: flex-end; padding: 0 14px 12px 0; position: relative; }
    .ok { width: 97px; height: 32px; background: #2d80e2; color: #fff; border-radius: 3px; text-align: center; line-height: 31px; }

    .redbox { position: absolute; left: 245px; top: 473px; width: 212px; height: 438px; border: 3px solid #ff1a10; border-radius: 4px; box-sizing: border-box; }
  `;

  private bigBtn(name: string, icon: string, state = '') {
    return html`<div class="big ${state}">
      <svg viewBox="0 0 40 40">${ICONS[icon]}</svg><span>${name}</span>
    </div>`;
  }

  private small(name: string, icon: string, extra: any = '', off = false) {
    return html`<div class="small ${off ? 'off' : ''}"><svg viewBox="0 0 20 20">${SMALL[icon]}</svg><span>${name}</span>${extra}</div>`;
  }

  private close() {
    return html`<svg viewBox="0 0 12 12"><path d="M1 1l10 10M11 1L1 11" stroke="#a6a6a6" stroke-width="1.300"/></svg>`;
  }

  render() {
    return html`<div class="page">
      <div class="top">
        <div class="brand"><svg width="39" height="20" viewBox="0 0 39 20"><path d="M3 0h5v3a2 2 0 0 1-5 0z" fill="#2a7de1"/><path d="M26 15l5-5v5z" fill="#777"/></svg></div>
        ${TABS.map(t => html`<div class="tab ${t === '工程量' ? 'on' : ''}">${t}</div>`)}
        <div class="ask">
          <span>楼层三维显示图元/轴网有错位，位置不对应如何处理?</span>
          <svg viewBox="0 0 20 20">${SMALL.search}</svg>
        </div>
        <div class="user"><div class="avatar"></div><span>hsy</span></div>
        <div class="mini">
          <svg viewBox="0 0 18 18" width="18" height="18"><path d="M9 2a7.500 7.500 0 1 1-4 13.800L2 17l1-3.500A7.500 7.500 0 0 1 9 2z" fill="none" stroke="#777" stroke-width="1.200"/><path d="M5.500 9.500h1M8.500 9.500h1M11.500 9.500h1" stroke="#777" stroke-width="1.400"/><circle cx="14" cy="3" r="2.500" fill="#cfe2f9" stroke="#2a7de1" stroke-width=".8"/></svg>
          <span class="q">?</span><i class="caret"></i>
          <svg viewBox="0 0 20 18" width="19" height="18"><path d="M6 1L1 5l3 4 2-1v9h8V8l2 1 3-4-5-4c-1 2-7 2-8 0z" fill="none" stroke="#777" stroke-width="1.200"/></svg>
          <svg class="up" viewBox="0 0 16 10" width="16" height="10"><path d="M1 9l7-7 7 7" fill="none" stroke="#666" stroke-width="1.400"/></svg>
        </div>
      </div>

      <div class="ribbon">
        <div class="group">
          <div class="sel-area">
            <div class="big sel-big"><svg viewBox="0 0 40 40">${ICONS.select}</svg><span>选择</span></div>
            <div class="col">
              ${this.small('拾取构件', 'pick')}
              ${this.small('批量选择', 'batch')}
              ${this.small('按属性选择', 'attr', html`<i class="caret"></i>`)}
            </div>
            <div class="col">
              ${this.small('查找图元', 'find')}
              ${this.small('过滤图元', 'filter', '', true)}
            </div>
          </div>
          <div class="glabel first">选择</div>
        </div>
        ${RIBBON.map(g => html`<div class="group" style="width:${g.width}px">
          <div class="btns" style="padding-left:${g.pad}px;gap:${g.gap ?? 0}px">
            ${g.items.map(i => this.bigBtn(i[0], i[1], i[2] ?? ''))}
          </div>
          <div class="glabel">${g.label}</div>
        </div>`)}
        <div class="vbar"></div>
      </div>

      <div class="selects">
        ${['基础层', '基础', '基础梁', 'DL-1', '分层1'].map(s => html`<div class="selbox"><span>${s}</span><i class="caret"></i></div>`)}
      </div>

      <div class="main">
        <div class="nav">
          <div class="phead">${this.close()}</div>
          <div class="navtitle"><span>导航栏</span></div>
          <div class="navbtns">
            <div class="navbtn"><svg viewBox="0 0 20 20">${SMALL.list}</svg></div>
            <div class="navbtn"><svg viewBox="0 0 20 20">${SMALL.card}</svg></div>
          </div>
          <div class="navlist">
            ${NAV_GROUPS.map(g => html`<div class="ng">
              <div class="t"><span>${g.t}</span>
                ${g.lock ? html`<svg class="lock" viewBox="0 0 18 20">${SMALL.lock}</svg><span class="badge">免费试用</span>` : ''}
              </div>
              ${g.dot ? html`<i class="dot" style="left:${g.dot - 3}px"></i>` : ''}
            </div>`)}
            ${NAV_ITEMS.map((n, i) => html`<div class="ni ${i === 0 ? 'on' : ''}"><svg viewBox="0 0 24 24">${NAV[n[1]]}</svg><span>${n[0]}</span></div>`)}
          </div>
          <div class="navthumb"></div>
        </div>

        <div class="mid">
          <section class="panel p1">
            <div class="phead">${this.close()}</div>
            <div class="ptabs"><div class="ptab">构件列表</div><div class="ptab off">图纸管理</div></div>
            <div class="tools">
              <div class="tool"><svg viewBox="0 0 20 20">${SMALL.newDoc}</svg><span>新建</span><i class="caret"></i></div>
              <div class="tool t2"><svg viewBox="0 0 20 20">${SMALL.copy}</svg><span>复制</span></div>
              <div class="tool on t3"><svg viewBox="0 0 20 20">${SMALL.trash}</svg><span>删除</span></div>
              <div class="tool t4"><svg viewBox="0 0 20 20">${SMALL.layerCopy}</svg><span>层间复制</span></div>
              <div class="more">▶▶</div>
            </div>
            <div class="psearch"><span>搜索构件...</span><svg viewBox="0 0 20 20">${SMALL.search}</svg></div>
            <div class="tree">
              <div class="node lv1"><i class="caret"></i><span>基础梁</span></div>
              <div class="node lv2"><i class="caret"></i><span>基础主梁</span></div>
              <div class="chip">DL-1  &lt;5&gt;</div>
            </div>
          </section>

          <section class="panel p2">
            <div class="phead">${this.close()}</div>
            <div class="ptabs"><div class="ptab">属性列表</div><div class="ptab off">图层管理</div></div>
            <div class="table">
              <div class="grid">
                <div></div><div class="h">属性名称</div><div class="h v">属性值</div><div class="h">附加</div>
                ${ROWS.map(r => html`
                  <div class="n ${r[0] === 9 ? 'sel' : ''}">${r[0]}</div>
                  <div class="name ${r[2] ? 'blue' : ''}">${r[1]}</div>
                  <div class="val ${r[0] >= 18 ? 'ro' : ''} ${r[0] === 9 ? 'edit' : ''}">
                    ${Array.isArray(r[3]) ? html`${r[3][0]}${rebarMark(r[3][1])}${r[3][2]}` : r[3]}
                  </div>
                  <div class="chk">${r[4] ? html`<div class="box"></div>` : ''}</div>`)}
              </div>
              <div class="tscroll"><i></i></div>
            </div>
          </section>
          <div class="strip"></div>
        </div>

        <div class="canvas">
          <svg viewBox="500 176 1397 756">${drawing()}</svg>
          <div class="views">
            <svg viewBox="0 0 26 26">${VIEW.orbit}</svg>
            <svg viewBox="0 0 26 26">${VIEW.cube3d}</svg>
            <svg viewBox="0 0 26 26">${VIEW.cubeTop}</svg>
            <i class="vc"></i>
            <svg viewBox="0 0 26 26">${VIEW.cubeFront}</svg>
            <i class="vc"></i>
            <svg viewBox="0 0 26 26">${VIEW.corners}</svg>
            <svg viewBox="0 0 26 26">${VIEW.dashCube}</svg>
            <hr />
            <svg viewBox="0 0 26 26">${VIEW.docEye}</svg>
          </div>
          <div class="dialog">
            <i class="glow" style="left:125px;top:0;width:22px;height:183px"></i>
            <i class="glow" style="left:-10px;top:0;width:18px;height:183px"></i>
            <i class="glow" style="left:110px;top:110px;width:55px;height:70px"></i>
            <i class="glow" style="left:5px;top:115px;width:30px;height:40px"></i>
            <div class="dhead"><span>提示</span>
              <svg viewBox="0 0 14 14"><path d="M1 1l12 12M13 1L1 13" stroke="#777" stroke-width="1.400"/></svg>
            </div>
            <div class="dbody">
              <svg class="info" viewBox="0 0 35 35"><circle cx="17.500" cy="17.500" r="17.500" fill="#2b7fd8"/><circle cx="17.500" cy="10.500" r="2" fill="#fff"/><rect x="16" y="14.500" width="3" height="13" rx="1.500" fill="#fff"/></svg>
              <span>没有查找到对应的钢筋计算结果!</span>
            </div>
            <div class="dfoot"><div class="ok">确定</div></div>
          </div>
        </div>
      </div>
      <div class="redbox"></div>
    </div>`;
  }
}
